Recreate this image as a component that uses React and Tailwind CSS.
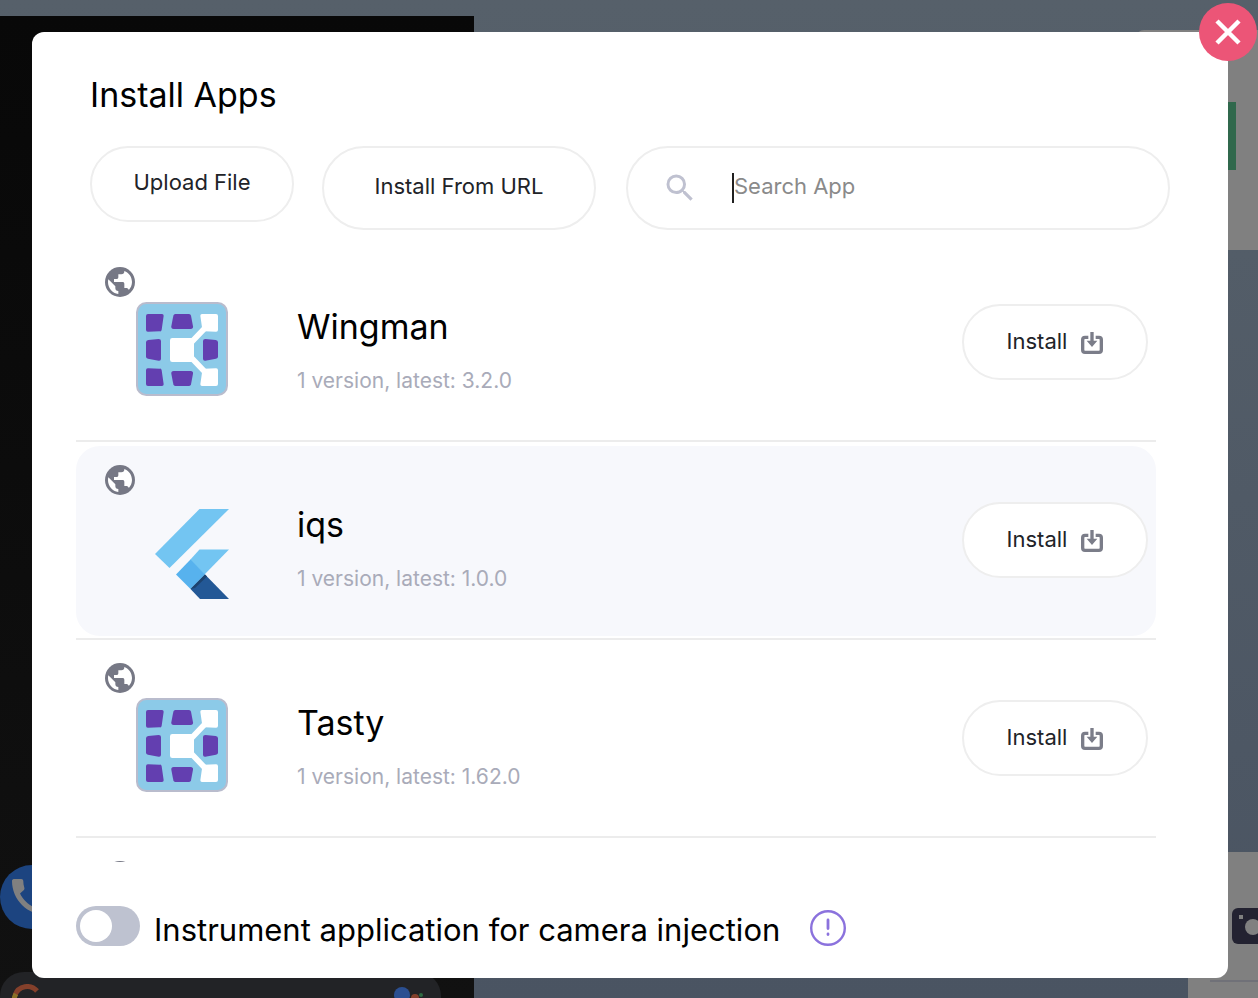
import React from "react";
import { MdSearch, MdCall } from "react-icons/md";

const apps = [
  { name: "Wingman", detail: "1 version, latest: 3.2.0", icon: "tiles" },
  { name: "iqs", detail: "1 version, latest: 1.0.0", icon: "flutter", active: true },
  { name: "Tasty", detail: "1 version, latest: 1.62.0", icon: "tiles" },
];

function TilesIcon() {
  const corner = "M174 177H216q5 0 5 5L215 224q-1 6-6 5L175 230q-7 1-7-6V183q0-6 6-6z";
  const middle = "M256 177H297q5 0 6 5L309 214q1 8-7 8H251q-8 0-7-8L250 182q1-5 6-5z";
  const side = "M175 255L206 252q7 0 7 6V311q0 7-7 6L174 311q-6-1-6-6V262q0-6 7-7z";
  return (
    <svg viewBox="138 141 276 282" className="h-[94px] w-[92px]" aria-hidden="true">
      <rect x="141" y="144" width="270" height="276" rx="28" fill="#8ccae8" stroke="#b9bccd" strokeWidth="6" />
      <g fill="#633fb0">
        <path d={corner} />
        <path d={middle} />
        <path d={side} />
        <path d={corner} transform="matrix(1 0 0 -1 0 570)" />
        <path d={middle} transform="matrix(1 0 0 -1 0 570)" />
        <path d={side} transform="matrix(-1 0 0 1 552 0)" />
      </g>
      <g fill="#fff">
        <rect x="240" y="249" width="72" height="72" rx="7" />
        <path d={corner} transform="matrix(-1 0 0 1 552 0)" />
        <path d={corner} transform="matrix(-1 0 0 -1 552 570)" />
      </g>
      <path d="M350 214L302 264M302 306L350 356" stroke="#fff" strokeWidth="17" fill="none" />
    </svg>
  );
}

function FlutterIcon() {
  return (
    <svg viewBox="135 500 93 100" className="h-[100px] w-[93px] overflow-visible" aria-hidden="true">
      <path d="M199.500 509H229L169.500 568L155 554z" fill="#73c5f2" />
      <path d="M199.500 549.500H229L204.500 574.500L190 560z" fill="#73c5f2" />
      <path d="M190.500 559.500L205 574.500L190.500 589L176 574.500z" fill="#57b2ee" />
      <path d="M205 574.500L229 599H200L190.500 589z" fill="#235896" />
      <path d="M190.500 589L205 574.500L207 576.500L195 588z" fill="#1d426e" />
    </svg>
  );
}

function InstallIcon() {
  return (
    <svg viewBox="426 126 66 66" className="mt-1 size-[22px]" aria-hidden="true">
      <path
        d="M448 142H438q-7 0-7 7V180q0 7 7 7H480q7 0 7-7V149q0-7-7-7H470"
        fill="none"
        stroke="#7b7d89"
        strokeWidth="10"
      />
      <path d="M454 126H464V152H475L459 171L443 152H454z" fill="#7b7d89" />
    </svg>
  );
}

function GlobeIcon() {
  return (
    <svg viewBox="45 36 90 90" className="size-[30px] shrink-0" aria-hidden="true">
      <circle cx="90" cy="81" r="45" fill="#767885" />
      <path
        d="M103 48C117 53 126 66 126 81C126 91 122 99 116.500 105C115 101 112 99 108 99H103V86Q103 81 99 81H72V72H81Q85 72 85 67V58H94Q103 58 103 48z"
        fill="#fff"
      />
      <path d="M55 73L76 94V99Q76 108 85 108V117C67 115 54 99 54 81Q54 77 55 73z" fill="#fff" />
    </svg>
  );
}

function AppRow({ app }) {
  return (
    <li className="border-b-2 border-[#ececec] pt-1 pb-0.5">
      <div
        className={
          app.active
            ? "flex h-[190px] rounded-3xl bg-[#f7f8fc] pt-[19px] pr-2 pl-[29px]"
            : "flex h-[190px] pt-[19px] pr-2 pl-[29px]"
        }
      >
        <GlobeIcon />
        <div className="mt-[35px] flex w-[93px] shrink-0 justify-end">
          {app.icon === "flutter" ? <FlutterIcon /> : <TilesIcon />}
        </div>
        <div className="mt-9 ml-[69px] min-w-0 flex-1">
          <h2 className="text-[34px] leading-[48px] text-black">{app.name}</h2>
          <p className="mt-3.5 text-[21px] leading-8 text-[#a9abb9]">{app.detail}</p>
        </div>
        <button
          type="button"
          className="mt-[37px] flex h-[76px] w-[186px] shrink-0 items-center justify-center gap-3.5 rounded-full border-2 border-[#eeeeee] bg-white pb-0.5 text-[22px] text-[#212328]"
        >
          Install
          <InstallIcon />
        </button>
      </div>
    </li>
  );
}

function Backdrop() {
  return (
    <div
      className="absolute inset-0 -z-10 flex justify-between overflow-hidden bg-linear-to-b from-[#56606a] to-[#4a5462]"
      aria-hidden="true"
    >
      <div className="mt-4 flex w-[474px] flex-col justify-end bg-linear-to-b from-[#080808] to-[#111111]">
        <div className="mb-[43px] flex size-16 items-center rounded-full bg-[#1c4480] pl-1.5">
          <MdCall className="size-12 text-[#808080]" />
        </div>
        <div className="flex h-[26px] w-[441px] items-start justify-between overflow-hidden rounded-t-3xl bg-[#222326] pt-3 pr-4 pl-3">
          <svg viewBox="0 0 28 28" className="size-7">
            <path d="M3 11A13 13 0 0 1 25 7" fill="none" stroke="#84402b" strokeWidth="5" />
            <path d="M2 18A13 13 0 0 1 4 10" fill="none" stroke="#8a7128" strokeWidth="5" />
          </svg>
          <svg viewBox="0 0 32 28" className="h-7 w-8">
            <circle cx="9" cy="11" r="8" fill="#2b4f91" />
            <circle cx="22" cy="14" r="4" fill="#84402b" />
            <circle cx="28" cy="11" r="2" fill="#2f6a42" />
          </svg>
        </div>
      </div>
      <div className="flex w-[122px] flex-col justify-between pt-[30px]">
        <div className="flex h-[220px] rounded-tl-lg bg-[#808080] pt-[72px]">
          <div className="h-[68px] w-[100px] bg-[#30684c]" />
        </div>
        <div className="h-[146px] w-[70px] self-end bg-[#808080] pt-14 pl-[22px]">
          <svg viewBox="0 0 48 36" className="ml-[22px] h-9 w-12">
            <rect width="48" height="36" rx="6" fill="#232231" />
            <rect x="7" y="7" width="4" height="4" fill="#808080" />
            <circle cx="21" cy="19" r="8" fill="#808080" />
          </svg>
          <div className="mt-9 h-0.5 bg-[#707178]" />
        </div>
      </div>
    </div>
  );
}

export default function App() {
  return (
    <main className="relative isolate h-screen px-[30px] pt-8 pb-5 pl-8 font-['Inter','Liberation_Sans',sans-serif]">
      <Backdrop />
      <section
        role="dialog"
        aria-labelledby="dialog-title"
        className="relative flex h-full flex-col rounded-xl bg-white pt-[39px] pb-8"
      >
        <button
          type="button"
          aria-label="Close"
          className="absolute -top-[29px] -right-[29px] flex size-[58px] items-center justify-center rounded-full bg-[#ec5577]"
        >
          <svg viewBox="0 0 26 26" className="size-[26px]" aria-hidden="true">
            <path d="M2 2L24 24M24 2L2 24" stroke="#fff" strokeWidth="4.500" />
          </svg>
        </button>

        <h1 id="dialog-title" className="pl-[58px] text-[34px] leading-[48px] text-black">
          Install Apps
        </h1>

        <div className="mt-[27px] flex items-start px-[58px] text-[22px] text-[#212328]">
          <button type="button" className="h-[76px] w-[204px] shrink-0 rounded-full border-2 border-[#eeeeee] pb-1">
            Upload File
          </button>
          <button
            type="button"
            className="ml-7 h-[84px] w-[274px] shrink-0 rounded-full border-2 border-[#eeeeee] pb-1"
          >
            Install From URL
          </button>
          <div className="ml-[30px] flex h-[84px] min-w-0 flex-1 items-center rounded-full border-2 border-[#eeeeee] pr-8 pl-[34px]">
            <MdSearch className="size-9 shrink-0 text-[#bfc1d0]" aria-hidden="true" />
            <span className="ml-[34px] h-[30px] w-0.5 shrink-0 bg-[#202020]" />
            <input
              type="text"
              aria-label="Search App"
              placeholder="Search App"
              className="min-w-0 flex-1 bg-transparent pb-1 outline-none placeholder:text-[#8a8a8a]"
            />
          </div>
        </div>

        <ul className="mt-3.5 mr-[72px] ml-11 min-h-0 flex-1 overflow-y-auto [scrollbar-width:none]">
          {apps.map((app) => (
            <AppRow key={app.name} app={app} />
          ))}
          <li className="h-[198px] pt-[23px] pl-[29px]">
            <GlobeIcon />
          </li>
        </ul>

        <div className="mt-11 flex h-10 items-center pl-11">
          <input
            id="camera-injection"
            type="checkbox"
            role="switch"
            className="h-10 w-16 shrink-0 appearance-none rounded-full bg-[#bec2d0] p-1 before:block before:size-8 before:rounded-full before:bg-white before:content-[''] checked:bg-[#8b72dd] checked:before:ml-6"
          />
          <label htmlFor="camera-injection" className="ml-3.5 pt-2 text-[31px] leading-10 text-black">
            Instrument application for camera injection
          </label>
          <svg viewBox="0 0 36 36" className="mt-1 ml-[30px] size-9 shrink-0" fill="none" stroke="#8b72dd" aria-hidden="true">
            <circle cx="18" cy="18" r="16.800" strokeWidth="2.400" />
            <path d="M18 10V18.500M18 24V24.500" strokeWidth="2.800" strokeLinecap="round" />
          </svg>
        </div>
      </section>
    </main>
  );
}
